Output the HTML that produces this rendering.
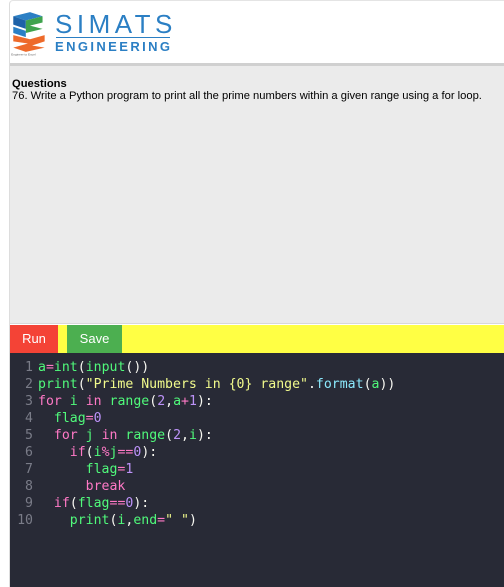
<!DOCTYPE html>
<html><head><style>
body{margin:0;width:504px;height:587px;overflow:hidden;background:#fff;font-family:"Liberation Sans",sans-serif;position:relative}
.frame{position:absolute;left:9px;top:0;right:-2px;bottom:0;border-left:1px solid #ddd;border-top:1px solid #e4e4e4;border-radius:4px 0 0 0}
.sep{position:absolute;left:10px;right:0;top:63px;height:3px;background:#d0d0d0}
.q{position:absolute;left:10px;right:0;top:66px;height:258px;background:#ebebeb;font-size:11.2px;color:#000;padding:12px 0 0 2px;box-sizing:border-box;line-height:12px;border-bottom:1px solid #d8d8d8}
.bar{position:absolute;left:10px;right:0;top:325px;height:28px;background:#ffff44}
.btn{position:absolute;top:0;height:28px;color:#fff;font-size:13px;line-height:28px;text-align:center}
.ed{position:absolute;left:10px;right:0;top:353px;bottom:0;background:#282a36;font-family:"DejaVu Sans Mono",monospace;font-size:13.2px;line-height:17px;padding-top:6px;white-space:pre;color:#f8f8f2}
.ln{display:inline-block;width:23px;text-align:right;color:#7a7c88;margin-right:5px}
.g{color:#50fa7b}.p{color:#ff79c6}.n{color:#bd93f9}.s{color:#f1fa8c}.c{color:#8be9fd}
</style></head><body>
<div class="frame"></div>
<svg style="position:absolute;left:9px;top:10px" width="42" height="46" viewBox="0 0 40 44">
<path d="M4 6 L20 2 L32 6 L16 10 Z" fill="#2b7fc4"/>
<path d="M4 6 L16 10 L16 18 L4 14 Z" fill="#1e62a8"/>
<path d="M16 10 L32 6 L32 12 L20 15 L32 18 L16 22 L16 18 Z" fill="#3fa34d"/>
<path d="M4 16 L16 20 L16 26 L4 22 Z" fill="#2b7fc4"/>
<path d="M4 24 L20 28 L34 24 L34 30 L22 34 L34 36 L16 40 L4 36 L18 32 L4 30 Z" fill="#ee6a2a"/>
<text x="2" y="43.5" font-size="3" fill="#666">Engineer to Excel</text>
</svg>
<div style="position:absolute;left:55px;top:9px;font-size:26px;letter-spacing:4.5px;color:#2b7fc4">SIMATS</div>
<div style="position:absolute;left:56px;top:37px;width:114px;height:1px;background:#2b7fc4"></div>
<div style="position:absolute;left:55px;top:39px;font-size:13px;letter-spacing:2.4px;color:#2b7fc4;font-weight:bold">ENGINEERING</div>
<div class="sep"></div>
<div class="q"><b>Questions</b><br>76. Write a Python program to print all the prime numbers within a given range using a for loop.</div>
<div class="bar"><div class="btn" style="left:0;width:48px;background:#f44336">Run</div><div class="btn" style="left:57px;width:55px;background:#4caf50">Save</div></div>
<div class="ed"><span class="ln">1</span><span class="g">a</span><span class="p">=</span><span class="g">int</span>(<span class="g">input</span>())
<span class="ln">2</span><span class="g">print</span>(<span class="s">"Prime Numbers in {0} range"</span>.<span class="c">format</span>(<span class="g">a</span>))
<span class="ln">3</span><span class="p">for</span> <span class="g">i</span> <span class="p">in</span> <span class="g">range</span>(<span class="n">2</span>,<span class="g">a</span><span class="p">+</span><span class="n">1</span>):
<span class="ln">4</span>  <span class="g">flag</span><span class="p">=</span><span class="n">0</span>
<span class="ln">5</span>  <span class="p">for</span> <span class="g">j</span> <span class="p">in</span> <span class="g">range</span>(<span class="n">2</span>,<span class="g">i</span>):
<span class="ln">6</span>    <span class="p">if</span>(<span class="g">i</span><span class="p">%</span><span class="g">j</span><span class="p">==</span><span class="n">0</span>):
<span class="ln">7</span>      <span class="g">flag</span><span class="p">=</span><span class="n">1</span>
<span class="ln">8</span>      <span class="p">break</span>
<span class="ln">9</span>  <span class="p">if</span>(<span class="g">flag</span><span class="p">==</span><span class="n">0</span>):
<span class="ln">10</span>    <span class="g">print</span>(<span class="g">i</span>,<span class="g">end</span><span class="p">=</span><span class="s">" "</span>)</div>
</body></html>
